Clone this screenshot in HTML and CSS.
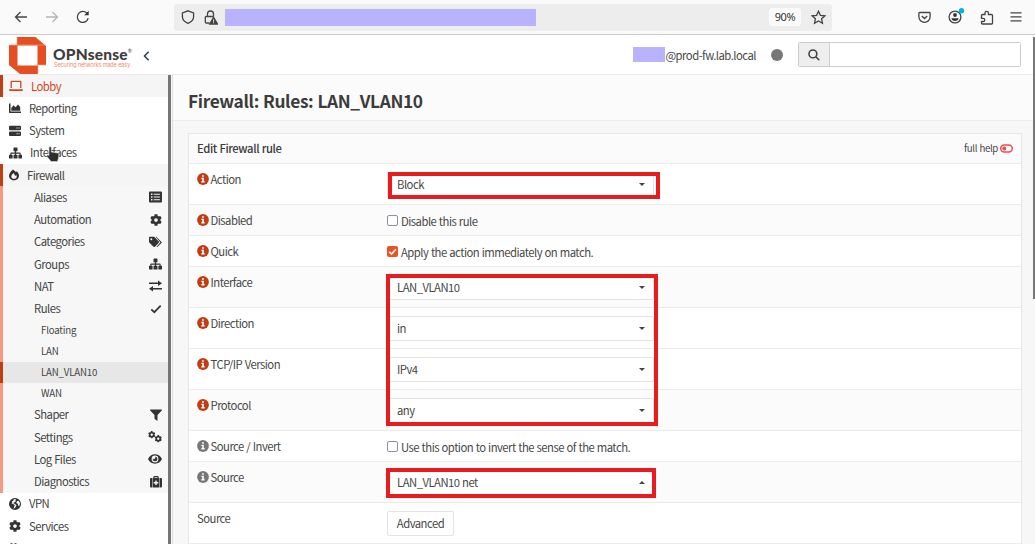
FILE: index.html
```
<!DOCTYPE html>
<html lang="en">
<head>
<meta charset="utf-8">
<title>Rules | Firewall | OPNsense</title>
<link rel="stylesheet" href="styles.css">
</head>
<body>
<svg class="sprite" aria-hidden="true">
  <symbol id="cog" viewBox="0 0 512 512"><path d="M487.4 315.7l-42.6-24.6c4.3-23.2 4.3-47 0-70.2l42.6-24.6c4.9-2.8 7.1-8.6 5.5-14-11.1-35.6-30-67.8-54.7-94.6-3.8-4.1-10-5.1-14.8-2.3L380.8 110c-17.9-15.4-38.5-27.3-60.8-35.1V25.8c0-5.6-3.9-10.5-9.4-11.7-36.7-8.2-74.3-7.8-109.2 0-5.5 1.2-9.4 6.1-9.4 11.7V75c-22.2 7.9-42.8 19.8-60.8 35.1L88.7 85.5c-4.9-2.8-11-1.9-14.8 2.3-24.7 26.7-43.6 58.9-54.7 94.6-1.7 5.4.6 11.2 5.5 14L67.3 221c-4.3 23.2-4.3 47 0 70.2l-42.6 24.6c-4.9 2.8-7.1 8.6-5.5 14 11.1 35.6 30 67.8 54.7 94.6 3.8 4.1 10 5.1 14.8 2.3l42.6-24.6c17.9 15.4 38.5 27.3 60.8 35.1v49.2c0 5.6 3.9 10.5 9.4 11.7 36.7 8.2 74.3 7.8 109.2 0 5.5-1.2 9.4-6.1 9.4-11.7v-49.2c22.2-7.9 42.8-19.8 60.8-35.1l42.6 24.6c4.9 2.8 11 1.9 14.8-2.3 24.7-26.7 43.6-58.9 54.7-94.6 1.5-5.5-.7-11.3-5.6-14.1zM256 336c-44.1 0-80-35.9-80-80s35.9-80 80-80 80 35.9 80 80-35.9 80-80 80z"/></symbol>
  <symbol id="sitemap" viewBox="0 0 13 11"><path d="M5 0h3a.5.5 0 0 1 .5.5v2.700a.5.5 0 0 1-.5.5h-.9v1.300h3.700a.9.9 0 0 1 .9.9v1.300h.8a.5.500 0 0 1 .5.500v2.700a.5.500 0 0 1-.5.500H9.900a.5.500 0 0 1-.5-.500V7.700a.5.500 0 0 1 .5-.500h.7V6.200H7.100v1H8a.5.500 0 0 1 .5.500v2.700a.5.500 0 0 1-.5.500H5a.5.500 0 0 1-.5-.500V7.700a.5.500 0 0 1 .5-.500h.9v-1H2.400v1h.7a.5.500 0 0 1 .5.500v2.700a.5.500 0 0 1-.5.500H.5a.5.500 0 0 1-.5-.500V7.700a.5.500 0 0 1 .5-.500h.8V5.900a.9.900 0 0 1 .9-.9h3.700V3.700H5a.5.500 0 0 1-.5-.5V.5A.5.500 0 0 1 5 0z"/></symbol>
  <symbol id="laptop" viewBox="0 0 14 12"><path d="M2.200 8V2.100a.8.800 0 0 1 .8-.8h8a.8.800 0 0 1 .8.800V8" fill="none" stroke="currentColor" stroke-width="1.300"/><path d="M0 9.300h14v.5a1.200 1.200 0 0 1-1.200 1.200H1.200A1.200 1.200 0 0 1 0 9.800z"/></symbol>
  <symbol id="chart" viewBox="0 0 12 12"><path d="M0 1.500h1.500v8H12V11H.7a.7.700 0 0 1-.7-.7z"/><path d="M2.300 8.700V6L4.500 3.200 6.500 5.200 9 2.600 11.200 5v3.700z"/></symbol>
  <symbol id="server" viewBox="0 0 12 12"><path fill-rule="evenodd" d="M1 .8h10a1 1 0 0 1 1 1v2.500a1 1 0 0 1-1 1H1a1 1 0 0 1-1-1V1.800a1 1 0 0 1 1-1zM7.500 2.500v1h1v-1zm2 0v1h1v-1zM1 6.500h10a1 1 0 0 1 1 1V10a1 1 0 0 1-1 1H1a1 1 0 0 1-1-1V7.500a1 1 0 0 1 1-1zM7.500 8.300v1h1v-1zm2 0v1h1v-1z"/></symbol>
  <symbol id="fire" viewBox="0 0 11 12"><path fill-rule="evenodd" d="M4.300 0C6 1 7 2 7.700 3.100L8.500 2C10.200 3.500 11 5.300 11 6.900 11 9.800 8.600 12 5.500 12S0 9.800 0 6.900C0 4.600 2 2 4.300 0zM5 3.700C3.500 5.200 2.500 6.300 2.500 7.600c0 1.600 1.400 2.600 3 2.600s3-1 3-2.600c0-.6-.2-1.200-.5-1.700L7 7z"/></symbol>
  <symbol id="globe" viewBox="0 0 12 12"><path fill-rule="evenodd" d="M6 0a6 6 0 1 1 0 12A6 6 0 0 1 6 0zM6.700 1 5 1.200 4.300 2.500 2.800 3.700 3.400 5l-.8.6 2 .7 1.300 1L5 9l-.3 1.900 1.700-1.700L7.500 7.400 6 6 4.300 5.300l1-1 1.200-.6zM8 3.300 7.300 5l1.500.8.400 1.700.8.700.9-2.200-.4-1.900-1-1.300z"/></symbol>
  <symbol id="users" viewBox="0 0 12 12"><path d="M1.500 1.200h2v4h-2zM5.500 1.200h2v4h-2z"/></symbol>
  <symbol id="list" viewBox="0 0 13 11"><path fill-rule="evenodd" d="M1 0h11a1 1 0 0 1 1 1v9a1 1 0 0 1-1 1H1a1 1 0 0 1-1-1V1a1 1 0 0 1 1-1zM2 2v1.400h1.500V2zm2.700.2v1h6.200v-1zM2 4.800v1.400h1.500V4.800zM4.700 5v1h6.200V5zM2 7.600V9h1.500V7.600zm2.700.2v1h6.200v-1z"/></symbol>
  <symbol id="tags" viewBox="0 0 13 11"><path fill-rule="evenodd" d="M.8.300h4a1 1 0 0 1 .7.300l4.300 4.300a1 1 0 0 1 0 1.400L5.900 10.200a1 1 0 0 1-1.400 0L.3 6A1 1 0 0 1 0 5.300V1.100A.8.800 0 0 1 .8.300zM2.300 1.700a1 1 0 1 0 0 2 1 1 0 0 0 0-2z"/><path d="M6.600.300h.7l5.200 5.100a.8.800 0 0 1 0 1.100L8.300 10.600l-.9-.3 4-4.300z"/></symbol>
  <symbol id="exchange" viewBox="0 0 13 12"><path d="M0 2.500h9V.5L13 3.300 9 6V4.100H0zM13 7.900H4V6L0 8.700l4 2.800v-2h9z"/></symbol>
  <symbol id="check" viewBox="0 0 12 12"><path d="M1.300 6.300 4.300 9.200 10.700 2.700" fill="none" stroke="currentColor" stroke-width="1.700"/></symbol>
  <symbol id="filter" viewBox="0 0 12 12"><path d="M.6.500h10.800c.6 0 .8.600.4 1L7.500 6v5.200c0 .5-.5.700-.8.400L4.800 10a.8.800 0 0 1-.3-.6V6L.2 1.500C-.2 1.100 0 .5.600.5z"/></symbol>
  <symbol id="eye" viewBox="0 0 14 12"><path fill-rule="evenodd" d="M7 1.300c3.200 0 5.600 1.900 7 4.700-1.400 2.800-3.800 4.700-7 4.700S1.400 8.800 0 6c1.400-2.800 3.800-4.700 7-4.700zm0 1.300a3.400 3.400 0 1 0 0 6.800 3.400 3.400 0 0 0 0-6.800z"/><path d="M7 3.700A2.300 2.300 0 1 1 4.800 5.600 1.300 1.300 0 0 0 7 3.700z"/></symbol>
  <symbol id="medkit" viewBox="0 0 12 12"><path fill-rule="evenodd" d="M3.300 2V1.200A1.200 1.200 0 0 1 4.500 0h3a1.200 1.200 0 0 1 1.200 1.200V2h.5v9.500H2.800V2zm1.200 0h3v-.8h-3zM5.300 4.500v1.600H3.700v1.400h1.600v1.600h1.400V7.500h1.600V6.100H6.700V4.500zM2.300 2v9.500H1a1 1 0 0 1-1-1V3a1 1 0 0 1 1-1zm7.400 0H11a1 1 0 0 1 1 1v7.500a1 1 0 0 1-1 1H9.700z"/></symbol>
  <symbol id="info" viewBox="0 0 12 12"><circle cx="6" cy="6" r="5.900"/><path d="M5.100 2.200h1.700v1.500H5.100zM4.400 4.800h2.400v3.300h.8v1.300H4.400V8.100h.8V6h-.8z" fill="#fff"/></symbol>
</svg>

<div class="toolbar">
  <div class="nav">
    <svg width="14" height="14" viewBox="0 0 14 14"><path d="M13 7H1.500M6.500 2l-5 5 5 5"/></svg>
    <svg class="dim" width="14" height="14" viewBox="0 0 14 14"><path d="M1 7h11.500M7.500 2l5 5-5 5"/></svg>
    <svg width="14" height="14" viewBox="0 0 14 14"><path d="M11.300 3.700A5.500 5.500 0 1 0 12.200 8.200"/><path d="M12.700.8v4.500H8.200z" fill="#333" stroke="none"/></svg>
  </div>
  <div class="address">
    <svg class="shield" width="14" height="14" viewBox="0 0 14 14"><path d="M7 .8 12.600 3v3.500c0 3-2.200 5.500-5.600 6.900C3.600 12 1.400 9.500 1.400 6.500V3z"/></svg>
    <svg class="lock" width="14" height="15" viewBox="0 0 14 15"><path d="M3.500 6.500V4a3 3 0 0 1 6 0v2.500M5.500 13H2.300a1 1 0 0 1-1-1V7.500a1 1 0 0 1 1-1h7"/><path d="M9.600 7.300 13.500 14H5.700z" fill="#444"/><path d="M9.600 9.500v2.200M9.600 12.300v1" stroke="#eee" stroke-width="1"/></svg>
    <span class="mask url"></span>
    <span class="zoom">90%</span>
    <svg class="star" width="15" height="15" viewBox="0 0 15 15"><path d="M7.500 1.200l1.900 4.100 4.500.5-3.300 3 .9 4.500-4-2.300-4 2.300.9-4.500-3.300-3 4.500-.5z"/></svg>
  </div>
  <div class="tools">
    <svg width="13" height="13" viewBox="0 0 13 13"><path d="M1.700 1.500h9.600a.8.800 0 0 1 .8.800v3.500a5.600 5.600 0 0 1-11.200 0V2.300a.8.800 0 0 1 .8-.8zM3.800 5l2.700 2.500L9.200 5"/></svg>
    <svg class="account" width="18" height="18" viewBox="0 0 18 18"><circle cx="8" cy="10" r="5.900"/><circle cx="8" cy="8" r="1.900" fill="#333" stroke="none"/><path d="M4.400 11.300h7.200c-.4 1.700-1.700 2.800-3.600 2.800s-3.200-1.100-3.600-2.800z" fill="#333" stroke="none"/><circle cx="14.500" cy="3.700" r="2.700" fill="#00b3f4" stroke="none"/></svg>
    <svg width="14" height="15" viewBox="0 0 14 15"><path d="M1.500 5.500a1 1 0 0 1 1-1H5V3a1.700 1.700 0 0 1 3.400 0v1.500h3.100a1 1 0 0 1 1 1v7.700a.8.800 0 0 1-.8.800H2.300a.8.800 0 0 1-.8-.8v-1.700h1.700a1.600 1.600 0 0 0 0-3.200H1.500z"/></svg>
    <svg width="12" height="12" viewBox="0 0 12 12"><path d="M.5 1.800h11M.5 5.800h11M.5 9.800h11"/></svg>
  </div>
</div>

<header class="header">
  <svg class="mark" width="37" height="37" viewBox="0 0 37 37"><path fill="#e64e21" fill-rule="evenodd" d="M8 0h18.500L37 9v19h-8v9H11L0 28V8h8zM8.500 8.500v20h20v-20z"/><path d="M8 0v8M8 8H0M8 8h20M29 28v9M29 28h8M28 8l9 0" stroke="#f3a58c" stroke-width=".6" fill="none"/></svg>
  <div class="brand"><div class="name">OPNsense<sup>®</sup></div><div class="tag">Securing networks made easy</div></div>
  <svg class="collapse" width="7" height="10" viewBox="0 0 7 10"><path d="M5.700.8 1.500 5l4.200 4.200" fill="none" stroke="#2d3b48" stroke-width="1.500"/></svg>
  <div class="user"><span class="mask"></span>@prod-fw.lab.local</div>
  <span class="dot"></span>
  <div class="search"><span class="glass"><svg width="12" height="12" viewBox="0 0 12 12"><circle cx="4.900" cy="4.900" r="3.900"/><path d="M7.800 7.800l3.500 3.500"/></svg></span><input class="query" type="text"></div>
</header>

<div class="body">
  <nav class="side">
    <div class="item current lobby"><svg class="w14"><use href="#laptop"/></svg>Lobby</div>
    <div class="item"><svg class="w12"><use href="#chart"/></svg>Reporting</div>
    <div class="item"><svg class="w12"><use href="#server"/></svg>System</div>
    <div class="item"><svg class="w13"><use href="#sitemap"/></svg>Interfaces</div>
    <div class="item current"><svg class="w10"><use href="#fire"/></svg>Firewall</div>
    <div class="sub">
      <div class="item">Aliases<svg class="w13"><use href="#list"/></svg></div>
      <div class="item">Automation<svg class="w12"><use href="#cog"/></svg></div>
      <div class="item">Categories<svg class="w13"><use href="#tags"/></svg></div>
      <div class="item">Groups<svg class="w13"><use href="#sitemap"/></svg></div>
      <div class="item">NAT<svg class="w13"><use href="#exchange"/></svg></div>
      <div class="item">Rules<svg class="w12"><use href="#check"/></svg></div>
      <div class="leaf">Floating</div>
      <div class="leaf">LAN</div>
      <div class="leaf active">LAN_VLAN10</div>
      <div class="leaf">WAN</div>
      <div class="item">Shaper<svg class="w12"><use href="#filter"/></svg></div>
      <div class="item">Settings<svg class="w14" viewBox="0 0 14 12"><use href="#cog" x="0" y="0" width="7.500" height="7.500"/><use href="#cog" x="6.500" y="4" width="7.500" height="7.500"/></svg></div>
      <div class="item">Log Files<svg class="w14"><use href="#eye"/></svg></div>
      <div class="item">Diagnostics<svg class="w12"><use href="#medkit"/></svg></div>
    </div>
    <div class="item"><svg class="w12"><use href="#globe"/></svg>VPN</div>
    <div class="item"><svg class="w12"><use href="#cog"/></svg>Services</div>
    <div class="item"><svg class="w12"><use href="#users"/></svg></div>
    <svg class="hand" width="14" height="17" viewBox="0 0 14 17"><path d="M3 1.500C3 .5 5.300.5 5.300 1.500V6l6 1c1 .2 1.700.8 1.600 1.800L12.500 12l-1 3.500H5L1 10.500C.3 9.300 1.500 8.500 3 9.500z" fill="#2e2e2e" stroke="#ddd" stroke-width=".6"/></svg>
  </nav>
  <div class="track"></div>

  <main class="main">
    <div class="title"><h1>Firewall: Rules: LAN_VLAN10</h1></div>
    <section class="panel">
      <div class="panel-head"><span class="strong">Edit Firewall rule</span><span class="help">full help <svg width="13" height="9" viewBox="0 0 13 9"><rect x=".7" y=".9" width="11.500" height="7" rx="3.500" fill="none" stroke="#f04d50" stroke-width="1.500"/><circle cx="4.300" cy="4.400" r="2" fill="#f04d50"/></svg></span></div>
      <div class="row tall"><div class="label"><svg><use href="#info"/></svg>Action</div><div class="select">Block<i></i></div></div>
      <div class="row alt"><div class="label"><svg><use href="#info"/></svg>Disabled</div><label class="opt"><span class="box"></span>Disable this rule</label></div>
      <div class="row"><div class="label"><svg><use href="#info"/></svg>Quick</div><label class="opt"><span class="box on"><svg viewBox="0 0 11 11"><path d="M2.200 5.700 4.500 8 8.900 3.200" fill="none" stroke="#fff" stroke-width="1.600"/></svg></span>Apply the action immediately on match.</label></div>
      <div class="row tall alt"><div class="label"><svg><use href="#info"/></svg>Interface</div><div class="select">LAN_VLAN10<i></i></div></div>
      <div class="row tall"><div class="label"><svg><use href="#info"/></svg>Direction</div><div class="select">in<i></i></div></div>
      <div class="row tall"><div class="label"><svg><use href="#info"/></svg>TCP/IP Version</div><div class="select">IPv4<i></i></div></div>
      <div class="row tall alt"><div class="label"><svg><use href="#info"/></svg>Protocol</div><div class="select">any<i></i></div></div>
      <div class="row"><div class="label muted"><svg><use href="#info"/></svg>Source / Invert</div><label class="opt"><span class="box"></span>Use this option to invert the sense of the match.</label></div>
      <div class="row tall alt"><div class="label muted"><svg><use href="#info"/></svg>Source</div><div class="select">LAN_VLAN10 net<i class="up"></i></div></div>
      <div class="row tall"><div class="label">Source</div><button class="btn">Advanced</button></div>
    </section>
    <div class="scroll"></div>
  </main>
</div>
<div class="mark-box m1"></div>
<div class="mark-box m2"></div>
<div class="mark-box m3"></div>
</body>
</html>
```
FILE: styles.css
```
* { box-sizing: border-box; }
body {
  margin: 0;
  width: 1035px;
  height: 544px;
  overflow: hidden;
  position: relative;
  display: flex;
  flex-direction: column;
  background: #fff;
  color: #484848;
  font: 11.3px/16px "Noto Sans CJK SC", "Open Sans", sans-serif;
  letter-spacing: -.52px;
  word-spacing: .5px;
}
svg { display: block; flex: none; fill: currentColor; }
.sprite { position: absolute; width: 0; height: 0; }

.toolbar {
  height: 35px;
  flex: none;
  display: flex;
  align-items: center;
  background: #fafafa;
  border-bottom: 1px solid #ccc;
}
.toolbar svg { fill: none; stroke: #444; stroke-width: 1.3; }
.toolbar .nav .dim { stroke: #b5b5b5; }
.nav { width: 174px; padding-left: 14px; display: flex; gap: 17px; }
.address {
  width: 658px;
  height: 27px;
  padding: 0 6px 0 7px;
  display: flex;
  align-items: center;
  background: #ededed;
  border-radius: 3px;
}
.lock { margin-left: 9px; }
.mask { background: #b9b2ff; }
.url { width: 311px; height: 17px; margin-left: 7px; }
.zoom {
  width: 32px;
  height: 18px;
  margin-left: auto;
  border-radius: 3px;
  background: #fafafa;
  color: #333;
  font: 11px/18px "Noto Sans", sans-serif;
  letter-spacing: -.35px;
  text-align: center;
}
.star { margin-left: 10px; }
.tools { flex: 1; padding: 0 13px 0 86px; display: flex; align-items: center; justify-content: space-between; }
.account { margin-bottom: 2px; }

.header {
  height: 40px;
  flex: none;
  padding: 0 14px 0 9px;
  display: flex;
  align-items: center;
  border-bottom: 1px solid #ebebeb;
}
.mark { margin-top: 1px; }
.brand { width: 82px; margin-left: 7px; padding-top: 4px; white-space: nowrap; }
.name { font: 900 15.5px/16px Lato, sans-serif; letter-spacing: .2px; color: #3d3d3d; }
.name sup { font-size: 5px; line-height: 0; vertical-align: 7px; font-weight: 400; }
.tag { font: 5.5px/6px Inter, sans-serif; letter-spacing: -.1px; word-spacing: 0; padding-left: 1px; color: #f08a6a; }
.collapse { margin-left: 8px; margin-top: 2px; }
.user { margin-left: auto; display: flex; align-items: center; height: 18px; }
.user .mask { width: 32px; height: 15px; }
.dot { width: 12px; height: 12px; border-radius: 50%; background: #777; margin: 0 15px; }
.search { width: 223px; height: 25px; display: flex; border: 1px solid #ccc; border-radius: 2px; }
.glass { width: 31px; display: flex; align-items: center; justify-content: center; background: #eee; border-right: 1px solid #ccc; }
.glass svg { fill: none; stroke: #444; stroke-width: 1.6; }
.query { flex: 1; min-width: 0; border: 0; background: #fff; }

.body { height: 469px; display: flex; }
.side { width: 168px; position: relative; overflow: hidden; color: #444; }
.item {
  height: 22.25px;
  padding-left: 9px;
  padding-bottom: 1px;
  display: flex;
  align-items: center;
  gap: 8px;
}
.item svg { height: 12px; margin-top: 1px; color: #333; }
.w10 { width: 10px; }
.w12 { width: 12px; }
.w13 { width: 13px; }
.w14 { width: 14px; }
.current { border-left: 3px solid #c03e14; padding-left: 6px; background: #f5f5f5; }
.lobby, .item.lobby svg { color: #d2451e; }
.sub { background: #f7f7f7; border-left: 3px solid #f59a80; }
.sub .item { padding: 0 6px 1px 31px; justify-content: space-between; }
.leaf { height: 21px; line-height: 21px; padding-left: 38px; font-size: 9.7px; letter-spacing: -.2px; }
.leaf.active { margin-left: -3px; padding-left: 38px; border-left: 3px solid #c03e14; background: #e7e7e7; }
.hand { position: absolute; left: 46px; top: 71px; }
.track { width: 5px; border-left: 3px solid #757575; border-right: 1px solid #ddd; background: #fafafa; }

.main { flex: 1; min-width: 0; position: relative; background: #f7f7f7; }
.title { height: 46px; padding-left: 15px; background: #fbfbfb; border-bottom: 1px solid #ebebeb; }
h1 { margin: 0; font-size: 17.3px; line-height: 51px; letter-spacing: -.35px; font-weight: 700; color: #3c3c3c; }
.panel { width: 834px; margin: 12px 0 0 15px; border: 1px solid #e7e7e7; background: #fff; }
.panel-head {
  height: 30px;
  padding: 0 8px 1px;
  display: flex;
  align-items: center;
  justify-content: space-between;
  background: #fbfbfb;
  border-bottom: 1px solid #ebebeb;
}
.strong { font-weight: 500; letter-spacing: -.42px; color: #3c3c3c; }
.help { display: flex; align-items: center; gap: 2px; font-size: 9.7px; letter-spacing: -.35px; }
.row { height: 31px; padding-left: 8px; display: flex; border-bottom: 1px solid #ebebeb; }
.tall { height: 41px; }
.alt { background: #fbfbfb; }
.label { width: 190px; height: 29px; display: flex; align-items: center; gap: 2px; }
.label svg { width: 12px; height: 12px; margin: 1px 0 0 -.5px; color: #c03e14; }
.label.muted svg { color: #777; }
.opt { height: 31px; display: flex; align-items: center; gap: 3px; }
.box { width: 11px; height: 11px; border: 1px solid #8f8f9d; border-radius: 2px; background: #fff; }
.box.on { border: 0; background: #e95420; }
.select {
  width: 267px;
  height: 25px;
  margin-top: 8px;
  padding: 0 8px 1px 9px;
  display: flex;
  align-items: center;
  justify-content: space-between;
  border: 1px solid #e3e3e3;
  border-radius: 2px;
  background: #fff;
}
.select i { border: 3px solid transparent; border-top-color: #444; border-bottom: 0; }
.select i.up { border-top: 0; border-bottom: 3px solid #444; }
.btn {
  width: 67px;
  height: 25px;
  margin-top: 8px;
  padding: 0 0 1px;
  border: 1px solid #e3e3e3;
  border-radius: 2px;
  background: #fff;
  color: inherit;
  font: inherit;
  letter-spacing: inherit;
}
.scroll { position: absolute; right: 0; top: -38px; width: 2px; height: 262px; background: #777; }
.mark-box { position: absolute; border: 4px solid #e81c1c; }
.m1 { left: 388px; top: 172px; width: 272px; height: 27px; }
.m2 { left: 386px; top: 274px; width: 272px; height: 152px; }
.m3 { left: 386px; top: 468px; width: 270px; height: 30px; }
```
